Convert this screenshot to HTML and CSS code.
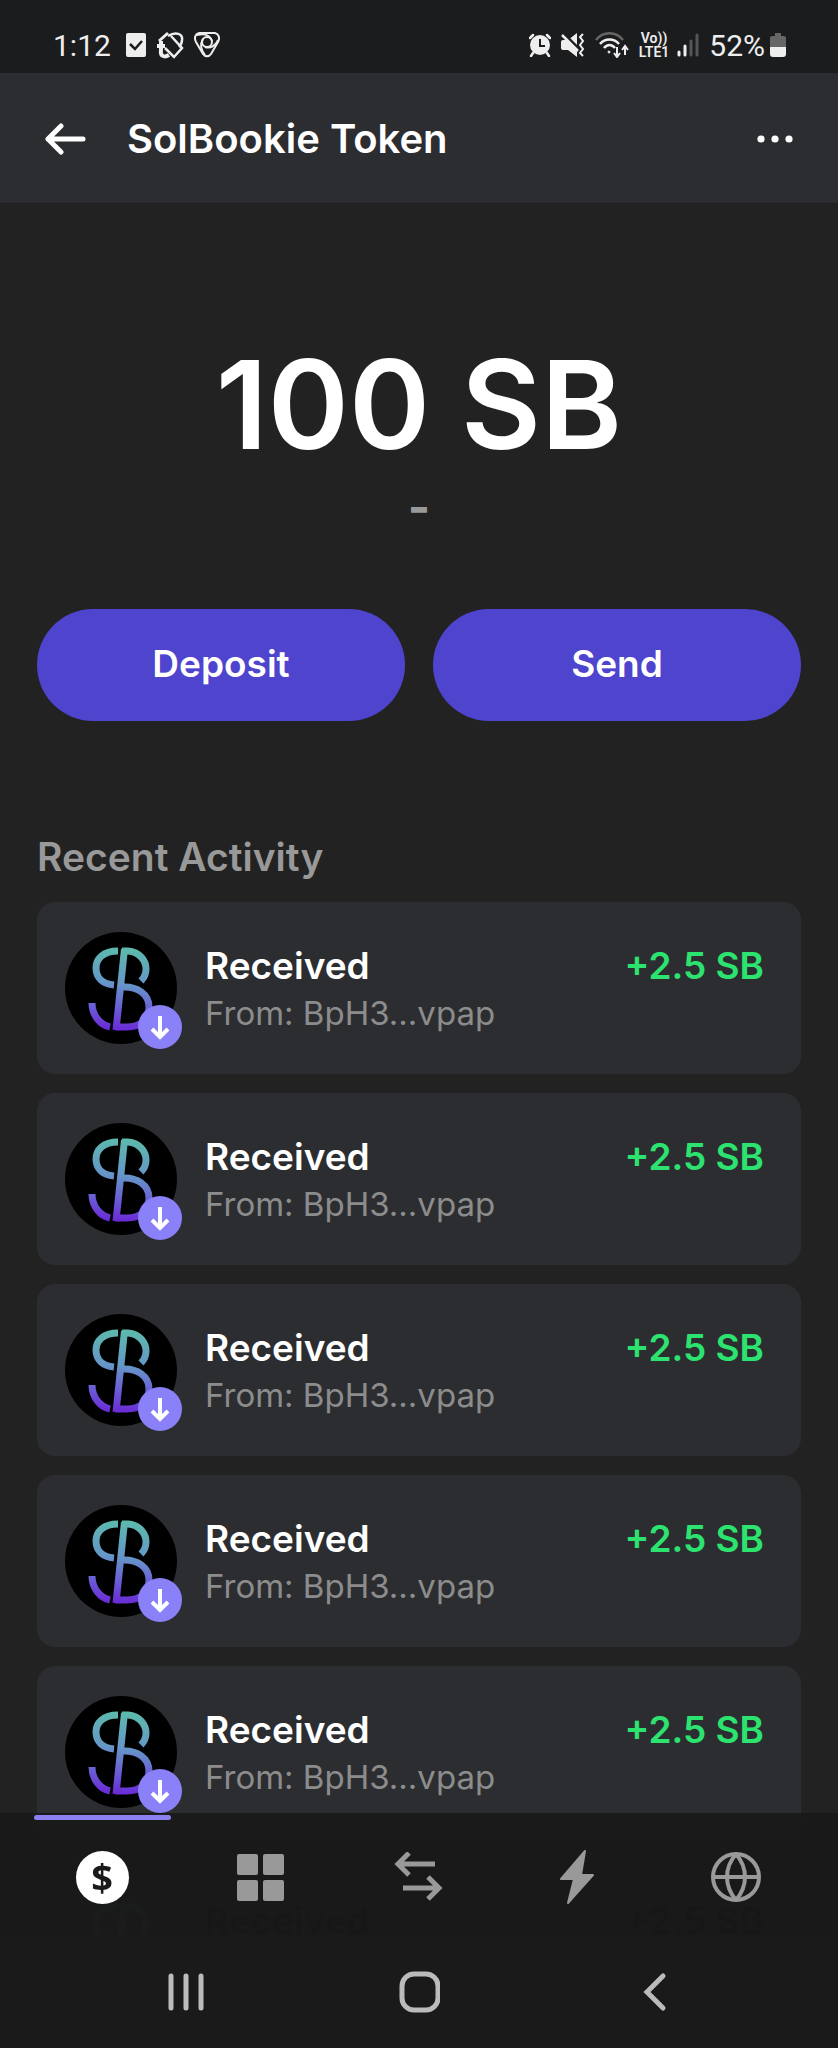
FILE: index.html
```html
<!DOCTYPE html>
<html lang="en">
<head>
    <meta charset="UTF-8">
    <meta name="viewport" content="width=device-width, initial-scale=1.0">
    <title>SolBookie Token</title>
    <link rel="stylesheet" href="styles.css">
</head>
<body>
    <!-- Shared icons -->
    <svg class="sprite" aria-hidden="true">
        <defs>
            <linearGradient id="sbGradient" gradientUnits="userSpaceOnUse" x1="58" y1="14" x2="52" y2="98">
                <stop offset="0" stop-color="#5cbcaa"/>
                <stop offset="0.45" stop-color="#6596c8"/>
                <stop offset="0.75" stop-color="#6a5cd6"/>
                <stop offset="1" stop-color="#6a2ad6"/>
            </linearGradient>
        </defs>
        <symbol id="token" viewBox="0 0 112 112">
            <circle cx="56" cy="56" r="56" fill="#000"/>
            <g fill="none" stroke="url(#sbGradient)" stroke-width="7">
                <path d="M53 19C38 19 31 27 31 36C31 46 38 52 49 53"/>
                <path d="M27 71C27 83 35 93 45 95"/>
                <path d="M51 98L59.500 17"/>
                <path d="M57 19H63C75 20 81 29 81 37C81 42 79 46 76 49"/>
                <path d="M57 55C72 54 84 62 84 75C84 88 75 95 62 95H50"/>
            </g>
        </symbol>
        <symbol id="down" viewBox="0 0 44 44">
            <circle cx="22" cy="22" r="22" fill="#8a80f8"/>
            <path d="M22 11V31M14 24L22 32L30 24" fill="none" stroke="#fff" stroke-width="4"/>
        </symbol>
    </svg>

    <div class="app">
        <div class="status-bar">
            <div class="status-left">
                <span class="clock">1:12</span>
                <svg width="20" height="26" viewBox="0 0 20 26">
                    <rect x="0" y="1" width="20" height="24" rx="2" fill="#eee"/>
                    <path d="M4 12L9 17L16 9" fill="none" stroke="#1b1c1e" stroke-width="2.500"/>
                </svg>
                <svg width="28" height="28" viewBox="0 0 28 28" fill="none" stroke="#eee">
                    <path d="M3 10L12 2" stroke-width="3"/>
                    <path d="M12 5C20 0 27 3 26 9C26 12 25 14 23 16" stroke-width="2.500"/>
                    <path d="M15 5L26 17L18 26L9 17" stroke-width="2.500"/>
                    <path d="M5 10V19C4 25 8 27 13 24M1 15H9" stroke-width="4"/>
                </svg>
                <svg width="26" height="26" viewBox="0 0 26 26" fill="none" stroke="#eee" stroke-width="2">
                    <path d="M5 1H21C25 2 26 6 24 10L17 22C15 25 11 25 9 22L2 10C0 6 1 2 5 1Z"/>
                    <circle cx="13" cy="10" r="5"/>
                    <path d="M3 3C8 2 15 1 18 9M24 8C22 13 17 17 11 15M11 23C7 18 6 12 9 7"/>
                </svg>
            </div>
            <div class="status-right">
                <svg width="22" height="24" viewBox="0 0 22 24">
                    <circle cx="11" cy="12" r="10" fill="#eee"/>
                    <path d="M1 5L4 2M21 5L18 2M4 20L2 23M18 20L20 23" stroke="#eee" stroke-width="2.500" stroke-linecap="round"/>
                    <path d="M11 6V13H16" fill="none" stroke="#1b1c1e" stroke-width="2"/>
                </svg>
                <svg width="24" height="24" viewBox="0 0 24 24">
                    <path d="M0 9Q0 7 2 7H7L16 0V24L7 17H2Q0 17 0 15Z" fill="#eee"/>
                    <path d="M2 0L18 16" stroke="#1b1c1e" stroke-width="3"/>
                    <path d="M1 2L17 18" stroke="#eee" stroke-width="2.500"/>
                    <path d="M22 1L19 4L22 8L19 12L22 16L19 20L22 23" fill="none" stroke="#eee" stroke-width="2"/>
                </svg>
                <svg width="34" height="26" viewBox="0 0 34 26" fill="none" stroke="#eee" stroke-width="2.500">
                    <path d="M1 8C8 -1 21 -1 28 8" stroke="#666"/>
                    <path d="M5 12C10 6 19 6 24 12M9 16C12 12 17 12 20 16"/>
                    <circle cx="14" cy="20" r="1" fill="#eee" stroke-width="1"/>
                    <path d="M22 15V24M19 21L22 25L25 21M30 23V15M27 18L30 14L33 18" stroke-width="2"/>
                </svg>
                <span class="volte"><span>Vo))</span><span>LTE1</span></span>
                <svg width="22" height="24" viewBox="0 0 22 24" stroke-width="3" stroke-linecap="round">
                    <path d="M2 19V22M8 13V22" stroke="#eee"/>
                    <path d="M14 8V22M20 2V22" stroke="#555"/>
                </svg>
                <span class="battery">52%</span>
                <svg width="16" height="24" viewBox="0 0 16 24">
                    <path d="M5 0H11V3H14Q16 3 16 5V14H0V5Q0 3 2 3H5Z" fill="#666"/>
                    <path d="M0 14H16V21Q16 24 13 24H3Q0 24 0 21Z" fill="#eee"/>
                </svg>
            </div>
        </div>

        <header class="header">
            <button class="icon-btn" aria-label="Back">
                <svg width="42" height="32" viewBox="0 0 42 32" fill="none" stroke="#fff" stroke-width="5" stroke-linecap="round" stroke-linejoin="round">
                    <path d="M16 3L3 16L16 29M3 16H38"/>
                </svg>
            </button>
            <h1>SolBookie Token</h1>
            <button class="icon-btn" aria-label="More">
                <svg width="36" height="8" viewBox="0 0 36 8" fill="#fff">
                    <circle cx="4" cy="4" r="3.600"/>
                    <circle cx="18" cy="4" r="3.600"/>
                    <circle cx="32" cy="4" r="3.600"/>
                </svg>
            </button>
        </header>

        <main class="content">
            <div class="balance">100 SB</div>
            <div class="fiat">-</div>

            <div class="actions">
                <button class="action-btn">Deposit</button>
                <button class="action-btn">Send</button>
            </div>

            <h2>Recent Activity</h2>
            <ul class="activity">
                <li class="tx">
                    <div class="tx-icon">
                        <svg class="token"><use href="#token"/></svg>
                        <svg class="badge"><use href="#down"/></svg>
                    </div>
                    <div class="tx-info">
                        <div class="tx-title">Received</div>
                        <div class="tx-from">From: BpH3...vpap</div>
                    </div>
                    <div class="tx-amount">+2.5 SB</div>
                </li>
                <li class="tx">
                    <div class="tx-icon">
                        <svg class="token"><use href="#token"/></svg>
                        <svg class="badge"><use href="#down"/></svg>
                    </div>
                    <div class="tx-info">
                        <div class="tx-title">Received</div>
                        <div class="tx-from">From: BpH3...vpap</div>
                    </div>
                    <div class="tx-amount">+2.5 SB</div>
                </li>
                <li class="tx">
                    <div class="tx-icon">
                        <svg class="token"><use href="#token"/></svg>
                        <svg class="badge"><use href="#down"/></svg>
                    </div>
                    <div class="tx-info">
                        <div class="tx-title">Received</div>
                        <div class="tx-from">From: BpH3...vpap</div>
                    </div>
                    <div class="tx-amount">+2.5 SB</div>
                </li>
                <li class="tx">
                    <div class="tx-icon">
                        <svg class="token"><use href="#token"/></svg>
                        <svg class="badge"><use href="#down"/></svg>
                    </div>
                    <div class="tx-info">
                        <div class="tx-title">Received</div>
                        <div class="tx-from">From: BpH3...vpap</div>
                    </div>
                    <div class="tx-amount">+2.5 SB</div>
                </li>
                <li class="tx">
                    <div class="tx-icon">
                        <svg class="token"><use href="#token"/></svg>
                        <svg class="badge"><use href="#down"/></svg>
                    </div>
                    <div class="tx-info">
                        <div class="tx-title">Received</div>
                        <div class="tx-from">From: BpH3...vpap</div>
                    </div>
                    <div class="tx-amount">+2.5 SB</div>
                </li>
                <li class="tx tx-next">
                    <div class="tx-icon">
                        <svg class="token"><use href="#token"/></svg>
                    </div>
                    <div class="tx-info">
                        <div class="tx-title">Received</div>
                    </div>
                    <div class="tx-amount">+2.5 SB</div>
                </li>
            </ul>
        </main>

        <div class="bottom">
            <nav class="tabs">
                <a href="#" class="tab active" aria-label="Wallet"><span class="coin">$</span></a>
                <a href="#" class="tab" aria-label="Collectibles">
                    <svg width="47" height="47" viewBox="0 0 47 47" fill="#999">
                        <rect x="0" y="0" width="21" height="21" rx="2"/>
                        <rect x="26" y="0" width="21" height="21" rx="2"/>
                        <rect x="0" y="26" width="21" height="21" rx="2"/>
                        <rect x="26" y="26" width="21" height="21" rx="2"/>
                    </svg>
                </a>
                <a href="#" class="tab" aria-label="Swap">
                    <svg width="50" height="50" viewBox="0 0 50 50" fill="none" stroke="#999" stroke-width="5">
                        <path d="M41 12H3M15 1L4 12L15 23M9 36H46M34 25L45 36L34 47"/>
                    </svg>
                </a>
                <a href="#" class="tab" aria-label="Activity">
                    <svg width="34" height="54" viewBox="0 0 34 54" fill="#999" stroke="#999" stroke-width="2" stroke-linejoin="round">
                        <path d="M25 1L1 29H14L8 53L33 25H21Z"/>
                    </svg>
                </a>
                <a href="#" class="tab" aria-label="Browser">
                    <svg width="50" height="50" viewBox="0 0 50 50" fill="none" stroke="#999" stroke-width="4">
                        <circle cx="25" cy="25" r="23"/>
                        <path d="M2 25H48M25 2C13 16 13 34 25 48C37 34 37 16 25 2Z"/>
                    </svg>
                </a>
            </nav>
            <div class="system-nav">
                <button class="icon-btn" aria-label="Recents">
                    <svg width="40" height="40" viewBox="0 0 40 40" stroke="#bbb" stroke-width="5" stroke-linecap="round">
                        <path d="M5 4V36M20 4V36M35 4V36"/>
                    </svg>
                </button>
                <button class="icon-btn" aria-label="Home">
                    <svg width="42" height="42" viewBox="0 0 42 42" fill="none" stroke="#bbb" stroke-width="5">
                        <rect x="4" y="3" width="36" height="36" rx="12"/>
                    </svg>
                </button>
                <button class="icon-btn" aria-label="Back">
                    <svg width="40" height="40" viewBox="0 0 40 40" fill="none" stroke="#bbb" stroke-width="5" stroke-linecap="round">
                        <path d="M31 4L15 20L31 36"/>
                    </svg>
                </button>
            </div>
        </div>
    </div>
</body>
</html>
```
FILE: styles.css
```css
* {
    margin: 0;
    padding: 0;
    box-sizing: border-box;
}

body {
    font-family: Inter, sans-serif;
    background: #222;
    color: white;
}

svg {
    display: block;
    flex-shrink: 0;
}

button {
    background: none;
    border: none;
    color: inherit;
    font-family: inherit;
    cursor: pointer;
}

.sprite {
    position: absolute;
    width: 0;
    height: 0;
}

.app {
    height: 100vh;
    display: flex;
    flex-direction: column;
    overflow: hidden;
}

/* Status bar */
.status-bar {
    display: flex;
    flex-shrink: 0;
    justify-content: space-between;
    height: 73px;
    padding: 17px 52px 0 53px;
    background: #1b1c1e;
    color: #eee;
    font-family: Roboto, sans-serif;
    font-size: 30px;
}

.status-left,
.status-right {
    display: flex;
    align-items: center;
    gap: 10px;
}

.clock {
    margin-right: 5px;
}

.volte {
    display: flex;
    flex-direction: column;
    align-items: center;
    margin-right: -2px;
    font-size: 14px;
    font-weight: 600;
    line-height: 14px;
}

.battery {
    margin-right: -5px;
}

/* Header */
.header {
    display: flex;
    flex-shrink: 0;
    align-items: center;
    height: 131px;
    padding: 1px 45px 0;
    background: #2c2d30;
    border-bottom: 1px solid #1e1f20;
}

.header h1 {
    flex: 1;
    margin-left: 40px;
    font-size: 40px;
    font-weight: 600;
}

/* Content */
.content {
    flex: 1;
    padding: 141px 37px 0;
    overflow-y: auto;
    scrollbar-width: none;
}

.balance {
    font-size: 123px;
    font-weight: 600;
    line-height: 120px;
    text-align: center;
}

.fiat {
    margin-top: 14px;
    color: #999;
    font-size: 48px;
    font-weight: 700;
    line-height: 56px;
    text-align: center;
}

.actions {
    display: flex;
    gap: 28px;
    margin-top: 74px;
}

.action-btn {
    flex: 1;
    height: 112px;
    padding-bottom: 3px;
    border-radius: 56px;
    background: #4e44ce;
    font-size: 37px;
    font-weight: 600;
}

h2 {
    margin: 112px 0 21px;
    color: #999;
    font-size: 39px;
    font-weight: 600;
    line-height: 48px;
}

.activity {
    display: flex;
    flex-direction: column;
    gap: 19px;
    list-style: none;
}

.tx {
    display: flex;
    gap: 28px;
    padding: 30px 37px 30px 28px;
    border-radius: 18px;
    background: #2c2d30;
}

.tx-icon {
    position: relative;
}

.token {
    width: 112px;
    height: 112px;
}

.badge {
    position: absolute;
    right: -5px;
    bottom: -5px;
    width: 44px;
    height: 44px;
}

.tx-info {
    flex: 1;
    padding-top: 10px;
}

.tx-title {
    font-size: 37px;
    font-weight: 600;
    line-height: 48px;
}

.tx-from {
    color: #8c8c8c;
    font-size: 33px;
    line-height: 46px;
}

.tx-amount {
    padding-top: 10px;
    color: #2de370;
    font-size: 37px;
    font-weight: 600;
    line-height: 48px;
}

/* row that shows faintly through the tab bar */
.tx-next,
.tx-next .tx-amount {
    background: none;
    color: black;
}

.tx-next .tx-icon {
    opacity: 0.2;
}

/* Bottom bars */
.bottom {
    position: fixed;
    left: 0;
    right: 0;
    bottom: 0;
    background: rgba(26, 26, 26, 0.9);
}

.tabs {
    display: flex;
    height: 123px;
    padding: 0 23px;
    background: rgba(26, 26, 26, 0.2);
}

.tab {
    position: relative;
    display: flex;
    flex: 1;
    align-items: center;
    justify-content: center;
    padding-top: 5px;
    text-decoration: none;
}

.tab.active::before {
    content: "";
    position: absolute;
    top: 2px;
    left: 11px;
    right: 10px;
    height: 5px;
    border-radius: 3px;
    background: #8a80f0;
}

.coin {
    width: 53px;
    height: 53px;
    border-radius: 50%;
    background: white;
    color: #1a1a1a;
    font-family: "Noto Sans", sans-serif;
    font-size: 38px;
    font-weight: 700;
    line-height: 53px;
    text-align: center;
}

.system-nav {
    display: flex;
    align-items: center;
    justify-content: space-between;
    height: 112px;
    padding: 0 166px;
    background: #1a1a1a;
}
```
